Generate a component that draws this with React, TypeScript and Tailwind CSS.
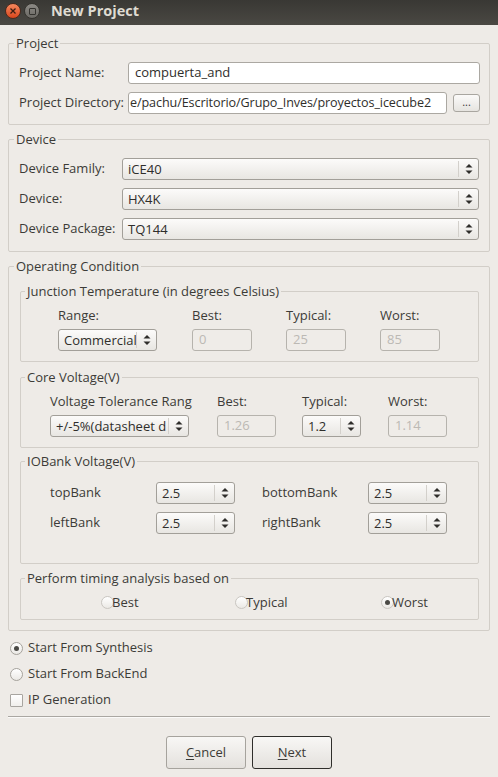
import React from "react";

function Arrows() {
  return (
    <svg width="8" height="12" viewBox="0 0 8 12">
      <polygon points="0.5,4.5 4,1 7.5,4.5" fill="#2e2d2a" />
      <polygon points="0.5,7.5 7.5,7.5 4,11" fill="#2e2d2a" />
    </svg>
  );
}

function Combo({ value, className = "" }: { value: string; className?: string }) {
  return (
    <div
      className={`flex h-[22px] items-center rounded-[3px] border border-[#a29f99] bg-gradient-to-b from-[#fcfbfa] to-[#e8e6e2] ${className}`}
    >
      <span className="flex-1 overflow-hidden whitespace-nowrap pl-[5px] leading-[20px] text-[#2f2e2b]">{value}</span>
      <span className="h-[16px] w-px bg-[#d3d0cb]" />
      <span className="flex w-[19px] justify-center">
        <Arrows />
      </span>
    </div>
  );
}

function Disabled({ value, className = "" }: { value: string; className?: string }) {
  return (
    <div
      className={`flex h-[22px] items-center rounded-[3px] border border-[#b6b3ad] bg-[#efece8] pl-[6px] text-[#bcb9b4] ${className}`}
    >
      {value}
    </div>
  );
}

function Frame({
  title,
  className = "",
  titleMl = "ml-[5px]",
  children,
}: {
  title: string;
  className?: string;
  titleMl?: string;
  children?: React.ReactNode;
}) {
  return (
    <div className={`flex flex-col rounded-[2px] border border-[#d2cec8] ${className}`}>
      <div className={`-mt-[9px] h-[16px] w-fit bg-[#eeebe7] px-[2px] leading-[16px] ${titleMl}`}>{title}</div>
      {children}
    </div>
  );
}

function Radio({ checked = false, faint = false }: { checked?: boolean; faint?: boolean }) {
  return (
    <span
      className={`flex h-[13px] w-[13px] shrink-0 items-center justify-center rounded-full border bg-gradient-to-b from-[#ffffff] to-[#ebe9e5] ${
        faint ? "border-[#c9c6c1]" : "border-[#a5a29c]"
      }`}
    >
      {checked && <span className="h-[5px] w-[5px] rounded-full bg-[#4a4945]" />}
    </span>
  );
}

export default function App() {
  return (
    <div className="h-[777px] w-[498px] overflow-hidden bg-[#eeebe7] font-['Open_Sans',sans-serif] text-[13px] text-[#3c3b37]">
      {/* Title bar */}
      <div className="flex h-[25px] items-start bg-gradient-to-b from-[#393834] to-[#4a4843] pl-[5px] pt-[3px]">
        <div className="flex h-[16px] w-[16px] items-center justify-center rounded-full border border-[#4a2a1e] bg-gradient-to-b from-[#f5875c] to-[#d8451a]">
          <svg width="6" height="6" viewBox="0 0 6 6">
            <path d="M0.5 0.5 L5.5 5.5 M5.5 0.5 L0.5 5.5" stroke="#3d1d12" strokeWidth="1.3" />
          </svg>
        </div>
        <div className="ml-[3px] flex h-[16px] w-[16px] items-center justify-center rounded-full border border-[#35342f] bg-gradient-to-b from-[#8c8a85] to-[#6b6964]">
          <span className="h-[7px] w-[7px] rounded-[1px] border border-[#34332f]" />
        </div>
        <div className="ml-[11px] -mt-[2px] text-[14.5px] font-bold leading-[20px] text-[#dfdbd2]">New Project</div>
      </div>

      <div className="flex flex-col px-[8px]">
        {/* Project */}
        <Frame title="Project" className="mt-[18px] h-[82px]">
          <div className="mt-[11px] flex flex-col gap-[8px] pl-[10px] pr-[9px]">
            <div className="flex h-[22px] items-center">
              <span className="w-[109px] shrink-0">Project Name:</span>
              <div className="flex h-[22px] flex-1 items-center rounded-[3px] border border-[#aba8a2] bg-white pl-[6px] text-[#2f2e2b]">
                compuerta_and
              </div>
            </div>
            <div className="flex h-[22px] items-center">
              <span className="w-[109px] shrink-0">Project Directory:</span>
              <div className="flex h-[22px] flex-1 items-center overflow-hidden whitespace-nowrap rounded-[3px] border border-[#aba8a2] bg-white pl-[1px] text-[12.6px] tracking-[-0.1px] text-[#2f2e2b]">
                e/pachu/Escritorio/Grupo_Inves/proyectos_icecube2
              </div>
              <div className="ml-[6px] flex h-[18px] w-[27px] items-center justify-center rounded-[3px] border border-[#a9a6a0] bg-gradient-to-b from-[#fbfaf9] to-[#e6e4e0] pb-[4px] text-[11px] leading-none">
                ...
              </div>
            </div>
          </div>
        </Frame>

        {/* Device */}
        <Frame title="Device" className="mt-[14px] h-[113px]">
          <div className="mt-[11px] flex flex-col gap-[8px] pl-[10px] pr-[10px]">
            <div className="flex items-center">
              <span className="w-[103px] shrink-0">Device Family:</span>
              <Combo value="iCE40" className="flex-1" />
            </div>
            <div className="flex items-center">
              <span className="w-[103px] shrink-0">Device:</span>
              <Combo value="HX4K" className="flex-1" />
            </div>
            <div className="flex items-center">
              <span className="w-[103px] shrink-0">Device Package:</span>
              <Combo value="TQ144" className="flex-1" />
            </div>
          </div>
        </Frame>

        {/* Operating Condition */}
        <Frame title="Operating Condition" className="mt-[14px] h-[365px]">
          <div className="ml-[11px] mr-[10px] flex flex-col">
            {/* Junction */}
            <Frame title="Junction Temperature (in degrees Celsius)" titleMl="ml-[4px]" className="mt-[17px] h-[71px]">
              <div className="mt-[8px] grid grid-cols-[134px_94px_94px_60px] pl-[37px]">
                <span className="h-[16px] leading-[16px]">Range:</span>
                <span className="h-[16px] leading-[16px]">Best:</span>
                <span className="h-[16px] leading-[16px]">Typical:</span>
                <span className="h-[16px] leading-[16px]">Worst:</span>
                <Combo value="Commercial" className="mt-[6px] w-[99px]" />
                <Disabled value="0" className="mt-[6px] w-[60px]" />
                <Disabled value="25" className="mt-[6px] w-[60px]" />
                <Disabled value="85" className="mt-[6px] w-[60px]" />
              </div>
            </Frame>

            {/* Core Voltage */}
            <Frame title="Core Voltage(V)" titleMl="ml-[4px]" className="mt-[15px] h-[71px]">
              <div className="mt-[8px] grid grid-cols-[167px_85px_86px_60px] pl-[29px]">
                <span className="h-[16px] w-[139px] whitespace-nowrap leading-[16px]">Voltage Tolerance Rang</span>
                <span className="h-[16px] leading-[16px]">Best:</span>
                <span className="h-[16px] leading-[16px]">Typical:</span>
                <span className="h-[16px] leading-[16px]">Worst:</span>
                <Combo value="+/-5%(datasheet d" className="mt-[6px] w-[139px]" />
                <Disabled value="1.26" className="mt-[6px] w-[59px]" />
                <Combo value="1.2" className="mt-[6px] w-[59px]" />
                <Disabled value="1.14" className="mt-[6px] w-[59px]" />
              </div>
            </Frame>

            {/* IOBank */}
            <Frame title="IOBank Voltage(V)" titleMl="ml-[4px]" className="mt-[13px] h-[103px]">
              <div className="mt-[13px] flex flex-col gap-[8px] pl-[29px]">
                <div className="flex items-center">
                  <span className="w-[106px]">topBank</span>
                  <Combo value="2.5" className="w-[79px]" />
                  <span className="ml-[27px] w-[106px]">bottomBank</span>
                  <Combo value="2.5" className="w-[79px]" />
                </div>
                <div className="flex items-center">
                  <span className="w-[106px]">leftBank</span>
                  <Combo value="2.5" className="w-[79px]" />
                  <span className="ml-[27px] w-[106px]">rightBank</span>
                  <Combo value="2.5" className="w-[79px]" />
                </div>
              </div>
            </Frame>

            {/* Timing */}
            <Frame title="Perform timing analysis based on" titleMl="ml-[4px]" className="mt-[14px] h-[42px]">
              <div className="mt-[8px] flex h-[16px] items-center pl-[80px]">
                <div className="flex w-[134px] items-center">
                  <Radio faint />
                  <span className="-ml-[2px] leading-[16px]">Best</span>
                </div>
                <div className="flex w-[146px] items-center">
                  <Radio faint />
                  <span className="-ml-[2px] leading-[16px]">Typical</span>
                </div>
                <div className="flex items-center">
                  <Radio checked faint />
                  <span className="-ml-[2px] leading-[16px]">Worst</span>
                </div>
              </div>
            </Frame>
          </div>
        </Frame>

        {/* Start options */}
        <div className="mt-[4px] flex flex-col pl-[2px]">
          <div className="flex h-[26px] items-center gap-[5px]">
            <Radio checked />
            <span>Start From Synthesis</span>
          </div>
          <div className="flex h-[26px] items-center gap-[5px]">
            <Radio />
            <span>Start From BackEnd</span>
          </div>
          <div className="flex h-[26px] items-center gap-[5px]">
            <span className="h-[13px] w-[13px] rounded-[1px] border border-[#a8a5a0] bg-gradient-to-b from-[#ffffff] to-[#f1efec]" />
            <span>IP Generation</span>
          </div>
        </div>

        <div className="mt-[3px] border-b border-t border-b-[#fbfaf9] border-t-[#aaa7a2]" />

        <div className="mt-[18px] flex justify-center gap-[6px]">
          <div className="flex h-[33px] w-[80px] items-center justify-center rounded-[3px] border border-[#a6a39d] bg-gradient-to-b from-[#f8f7f5] to-[#e4e1dd]">
            <span>
              <span className="underline underline-offset-2">C</span>ancel
            </span>
          </div>
          <div className="flex h-[33px] w-[80px] items-center justify-center rounded-[3px] border border-[#2f2e2b] bg-gradient-to-b from-[#f8f7f5] to-[#e4e1dd]">
            <span>
              <span className="underline underline-offset-2">N</span>ext
            </span>
          </div>
        </div>
      </div>
    </div>
  );
}
